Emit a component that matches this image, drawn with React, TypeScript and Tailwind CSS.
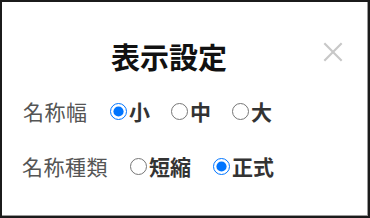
import { useState } from "react"

const widths = ["小", "中", "大"]
const kinds = ["短縮", "正式"]

function RadioItem({ name, label, checked, onChange }: { name: string; label: string; checked: boolean; onChange: () => void }) {
  return (
    <label className="flex items-center cursor-pointer">
      <input
        type="radio"
        name={name}
        checked={checked}
        onChange={onChange}
        className="m-0 h-[17px] w-[17px] accent-[#0075ff]"
      />
      <span className="ml-[2px] font-bold text-[#333]">{label}</span>
    </label>
  )
}

export default function App() {
  const [size, setSize] = useState("小")
  const [kind, setKind] = useState("正式")

  return (
    <div
      className="relative h-[218px] w-[370px] border-2 border-[#1b1b1b] bg-white"
      style={{ fontFamily: '"Noto Sans CJK JP", "Noto Sans", sans-serif' }}
    >
      <div className="pointer-events-none absolute inset-0 border-r border-b border-[#9a9a9a]" />
      <button className="absolute right-[22px] top-[37px] text-[#c8c8c8]">
        <svg width="26" height="26" viewBox="0 0 24 24" fill="none" stroke="currentColor" strokeWidth="2">
          <path d="M4 4 L20 20 M20 4 L4 20" />
        </svg>
      </button>

      <div className="flex flex-col">
        <div className="pt-[34px] pr-[32px] text-center text-[29px] font-bold leading-[40px] text-[#111]">表示設定</div>

        <div className="mt-[20px] flex items-center pl-[21px] text-[21px] leading-[30px]">
          <span className="w-[87px] tracking-[0.5px] text-[#555]">名称幅</span>
          <div className="flex gap-[21px]">
            {widths.map((w) => (
              <RadioItem key={w} name="width" label={w} checked={size === w} onChange={() => setSize(w)} />
            ))}
          </div>
        </div>

        <div className="mt-[25px] flex items-center pl-[20px] text-[21px] leading-[30px]">
          <span className="w-[108px] tracking-[0.5px] text-[#555]">名称種類</span>
          <div className="flex gap-[22px]">
            {kinds.map((k) => (
              <RadioItem key={k} name="kind" label={k} checked={kind === k} onChange={() => setKind(k)} />
            ))}
          </div>
        </div>
      </div>
    </div>
  )
}
